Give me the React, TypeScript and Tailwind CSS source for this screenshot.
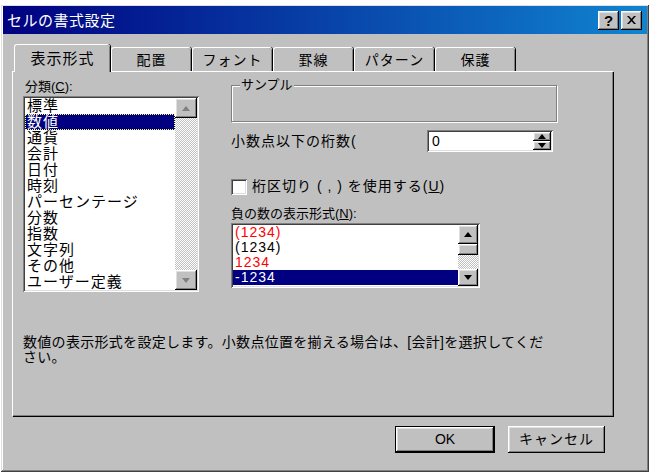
import React from 'react';

const raised =
  'shadow-[inset_-1px_-1px_0_#000,inset_1px_1px_0_#fff,inset_-2px_-2px_0_#808080,inset_2px_2px_0_#dfdfdf]';
const sunken =
  'shadow-[inset_1px_1px_0_#808080,inset_-1px_-1px_0_#fff,inset_2px_2px_0_#404040,inset_-2px_-2px_0_#dfdfdf]';

// dithered scrollbar track
const track = 'bg-[repeating-conic-gradient(#ffffff_0%_25%,#c0c0c0_0%_50%)] bg-[length:2px_2px]';

const Arrow = ({ up, grey }: { up?: boolean; grey?: boolean }) => (
  <svg width="8" height="5" viewBox="0 0 8 5">
    <polygon points={up ? '0,5 8,5 4,0' : '0,0 8,0 4,5'} fill={grey ? '#808080' : '#000'} />
  </svg>
);

const ScrollBtn = ({ up, grey, h }: { up?: boolean; grey?: boolean; h: string }) => (
  <div className={`w-full ${h} bg-[#c0c0c0] ${raised} flex items-center justify-center`}>
    <Arrow up={up} grey={grey} />
  </div>
);

const categories = ['標準', '数値', '通貨', '会計', '日付', '時刻', 'パーセンテージ', '分数', '指数', '文字列', 'その他', 'ユーザー定義'];

const negatives = [
  { t: '(1234)', c: 'text-[#ff0000]' },
  { t: '(1234)', c: 'text-black' },
  { t: '1234', c: 'text-[#ff0000]' },
  { t: '-1234', c: 'text-white bg-[#000080]' },
];

const tabs = ['配置', 'フォント', '罫線', 'パターン', '保護'];

export default function App() {
  return (
    <div className="w-[650px] h-[475px] bg-white pt-[5px] font-['Liberation_Sans','Noto_Sans_CJK_JP',sans-serif] text-[14px] text-black overflow-hidden">
      <div className="w-[648px] ml-[1px] h-[467px] bg-[#c0c0c0] flex flex-col shadow-[inset_-1px_-1px_0_#404040,inset_1px_1px_0_#dfdfdf,inset_-2px_-2px_0_#808080,inset_2px_2px_0_#fff]">
        {/* title bar */}
        <div className="h-[28px] mx-[2px] mt-[1px] bg-[linear-gradient(to_right,#000080,#1084d0)] flex items-center pl-[4px] pr-[5px]">
          <span className="text-white text-[15px] leading-none tracking-[0.5px]">セルの書式設定</span>
          <div className="ml-auto flex gap-[2px]">
            <div className={`w-[21px] h-[19px] bg-[#c0c0c0] ${raised} flex items-center justify-center text-[15px] font-bold leading-none`}>?</div>
            <div className={`w-[21px] h-[19px] bg-[#c0c0c0] ${raised} flex items-center justify-center`}>
              <svg width="9" height="8" viewBox="0 0 9 8">
                <path d="M0 0h2l2.5 2.7L7 0h2L5.5 4 9 8H7L4.5 5.3 2 8H0l3.5-4z" fill="#000" />
              </svg>
            </div>
          </div>
        </div>

        {/* tabs */}
        <div className="flex items-end pl-[13px] mt-[9px] h-[28px]">
          <div className="w-[96px] h-[28px] rounded-t-[3px] border-t border-l border-white shadow-[inset_-1px_0_0_#808080,1px_0_0_#000] flex items-center justify-center text-[15px] tracking-[1px] relative z-10 bg-[#c0c0c0] -mb-[1px] pt-[1px]">
            表示形式
          </div>
          {tabs.map((t) => (
            <div
              key={t}
              className="w-[80px] h-[24px] ml-[1px] rounded-t-[3px] border-t border-l border-white shadow-[inset_-1px_0_0_#808080,1px_0_0_#000] flex items-center justify-center text-[14px] tracking-[1px] pt-[1px]"
            >
              {t}
            </div>
          ))}
        </div>

        {/* panel */}
        <div className="ml-[11px] w-[601px] h-[345px] border-t border-l border-white shadow-[inset_-1px_-1px_0_#808080,1px_1px_0_#000] px-[10px] pt-[6px] flex flex-col">
          <div className="flex">
            {/* left column */}
            <div className="w-[176px] flex flex-col">
              <div className="h-[17px] leading-[17px] ml-[2px] text-[13px]">
                分類(<span className="underline">C</span>):
              </div>
              <div className={`mt-[1px] h-[196px] bg-white ${sunken} p-[2px] flex`}>
                <div className="flex-1 flex flex-col text-[15px] leading-[16px]">
                  {categories.map((c, i) => (
                    <div
                      key={c}
                      className={`pl-[2px] h-[16px] tracking-[1px] ${i === 1 ? 'bg-[#000080] text-white outline-1 outline-dotted outline-[#ffff80] -outline-offset-1' : ''}`}
                    >
                      {c}
                    </div>
                  ))}
                </div>
                <div className={`w-[22px] flex flex-col ${track}`}>
                  <ScrollBtn up grey h="h-[20px]" />
                  <div className="flex-1" />
                  <ScrollBtn grey h="h-[20px]" />
                </div>
              </div>
            </div>

            {/* right column */}
            <div className="ml-[32px] w-[326px] flex flex-col">
              <div className="relative mt-[7px] h-[37px] border border-[#808080] shadow-[inset_1px_1px_0_#fff,1px_1px_0_#fff]">
                <span className="absolute -top-[9px] left-[8px] bg-[#c0c0c0] px-[1px] text-[13px] leading-[16px]">サンプル</span>
              </div>
              <div className="flex items-center mt-[8px] h-[22px]">
                <span className="text-[14px] tracking-[1px]">小数点以下の桁数(</span>
                <div className={`ml-auto mr-[4px] w-[126px] h-[22px] bg-white ${sunken} flex p-[2px]`}>
                  <span className="flex-1 pl-[3px] text-[14px] leading-[18px]">0</span>
                  <div className="w-[18px] flex flex-col">
                    <ScrollBtn up h="h-[9px]" />
                    <ScrollBtn h="h-[9px]" />
                  </div>
                </div>
              </div>
              <div className="flex items-center mt-[26px] h-[17px]">
                <div className={`w-[16px] h-[16px] bg-white ${sunken}`} />
                <span className="ml-[5px] text-[14px] tracking-[1px]">
                  桁区切り ( , ) を使用する(<span className="underline">U</span>)
                </span>
              </div>
              <div className="mt-[11px] h-[15px] leading-[15px] text-[13px]">
                負の数の表示形式(<span className="underline">N</span>):
              </div>
              <div className={`mt-[2px] w-[249px] h-[65px] bg-white ${sunken} p-[2px] flex`}>
                <div className="flex-1 flex flex-col text-[14px] leading-[15px]">
                  {negatives.map((n, i) => (
                    <div key={i} className={`pl-[2px] h-[15px] tracking-[1px] ${n.c}`}>
                      {n.t}
                    </div>
                  ))}
                </div>
                <div className="w-[20px] flex flex-col">
                  <ScrollBtn up h="h-[19px]" />
                  <div className={`h-[11px] bg-[#c0c0c0] ${raised}`} />
                  <div className={`flex-1 ${track}`} />
                  <ScrollBtn h="h-[17px]" />
                </div>
              </div>
            </div>
          </div>

          <div className="mt-[43px] text-[14px] leading-[15px] tracking-[0.3px]">
            数値の表示形式を設定します。小数点位置を揃える場合は、[会計]を選択してくだ
            <br />
            さい。
          </div>
        </div>

        {/* buttons */}
        <div className="flex justify-end gap-[13px] pr-[44px] mt-[10px]">
          <div className="w-[100px] h-[27px] border border-black">
            <div className={`w-full h-full ${raised} flex items-center justify-center text-[14px]`}>OK</div>
          </div>
          <div className={`w-[97px] h-[27px] ${raised} flex items-center justify-center text-[14px] tracking-[1px]`}>
            キャンセル
          </div>
        </div>
      </div>
    </div>
  );
}
